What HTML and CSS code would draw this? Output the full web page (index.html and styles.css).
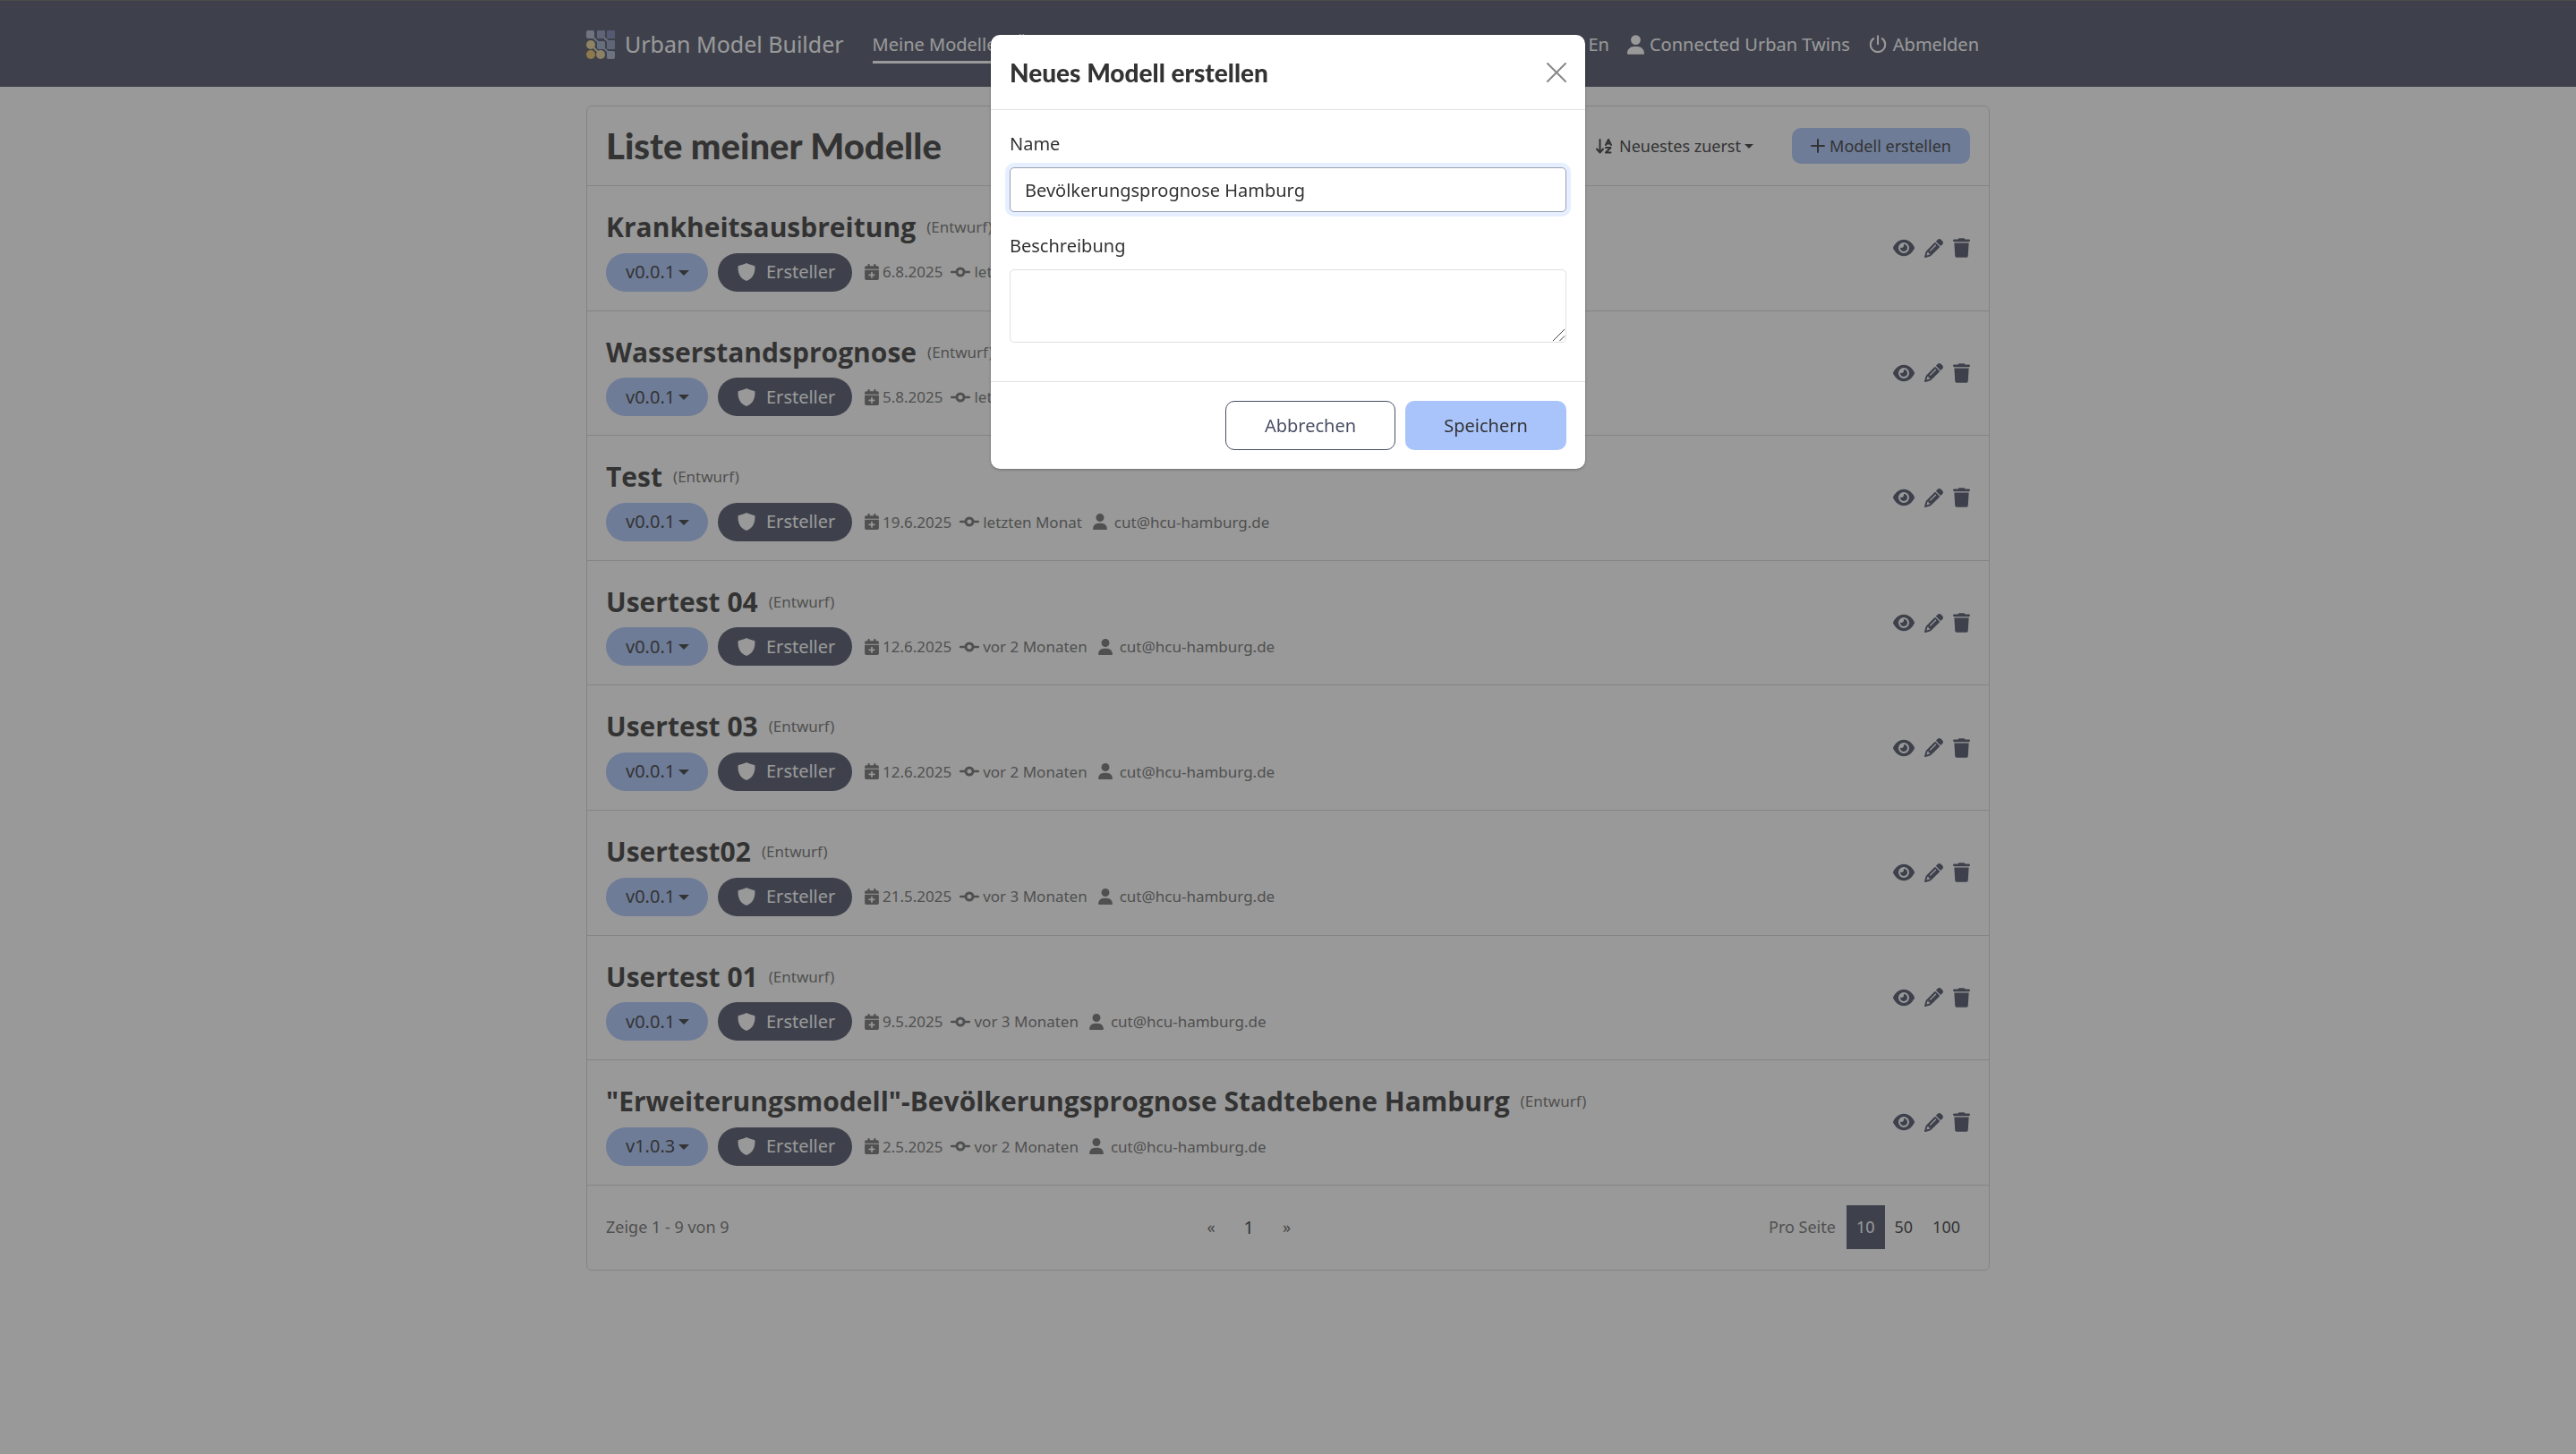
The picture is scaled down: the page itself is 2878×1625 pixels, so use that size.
FILE: index.html
```html
<!DOCTYPE html>
<html lang="de">
<head>
<meta charset="utf-8">
<title>Urban Model Builder</title>
<link rel="stylesheet" href="styles.css">
</head>
<body>
<svg class="sprite" aria-hidden="true">
  <symbol id="i-user" viewBox="0 0 448 512"><path d="M224 256A128 128 0 1 0 224 0a128 128 0 1 0 0 256zm-45.700 48C79.800 304 0 383.800 0 482.300C0 498.700 13.300 512 29.700 512H418.300c16.400 0 29.700-13.300 29.700-29.700C448 383.800 368.200 304 269.700 304H178.300z"/></symbol>
  <symbol id="i-power" viewBox="0 0 32 32"><path d="M16 2v13M9 6a12 12 0 1 0 14 0" fill="none" stroke="currentColor" stroke-width="3" stroke-linecap="round"/></symbol>
  <symbol id="i-shield" viewBox="0 0 32 34"><path d="M16 1c4 2 10 4 15 5c1 12-3 22-15 27C4 28 0 18 1 6c5-1 11-3 15-5z"/></symbol>
  <symbol id="i-cal" viewBox="0 0 448 512"><path d="M96 32V64H48C21.500 64 0 85.500 0 112v48H448V112c0-26.500-21.500-48-48-48H352V32c0-17.700-14.300-32-32-32s-32 14.300-32 32V64H160V32c0-17.700-14.300-32-32-32S96 14.300 96 32zM448 192H0V464c0 26.500 21.500 48 48 48H400c26.500 0 48-21.500 48-48V192zM224 248c13.300 0 24 10.700 24 24v56h56c13.300 0 24 10.700 24 24s-10.700 24-24 24H248v56c0 13.300-10.700 24-24 24s-24-10.700-24-24V376H144c-13.300 0-24-10.700-24-24s10.700-24 24-24h56V272c0-13.300 10.700-24 24-24z"/></symbol>
  <symbol id="i-commit" viewBox="0 0 44 32"><path d="M2 16h11M31 16h11" fill="none" stroke="currentColor" stroke-width="5" stroke-linecap="round"/><circle cx="22" cy="16" r="8" fill="none" stroke="currentColor" stroke-width="6"/></symbol>
  <symbol id="i-eye" viewBox="0 0 576 512"><path d="M288 32c-80.800 0-145.500 36.800-192.600 80.600C48.600 156 17.300 208 2.500 243.700c-3.300 7.900-3.300 16.700 0 24.600C17.300 304 48.600 356 95.400 399.400C142.500 443.200 207.200 480 288 480s145.500-36.800 192.600-80.600c46.800-43.500 78.100-95.400 93-131.100c3.300-7.900 3.300-16.700 0-24.600c-14.900-35.700-46.200-87.700-93-131.100C433.500 68.800 368.800 32 288 32zM144 256a144 144 0 1 1 288 0 144 144 0 1 1 -288 0zm144-64c0 35.300-28.700 64-64 64c-7.100 0-13.900-1.200-20.300-3.300c-5.500-1.800-11.900 1.600-11.700 7.400c.3 6.900 1.300 13.800 3.200 20.700c13.700 51.200 66.400 81.600 117.600 67.900s81.600-66.400 67.900-117.600c-11.100-41.500-47.800-69.400-88.600-71.100c-5.800-.2-9.200 6.100-7.400 11.700c2.100 6.400 3.300 13.200 3.300 20.300z"/></symbol>
  <symbol id="i-pencil" viewBox="0 0 512 512"><path d="M410.300 231l11.300-11.300-33.900-33.900-62.100-62.100L291.700 89.800l-11.300 11.300-22.600 22.600L58.600 322.900c-10.400 10.400-18 23.300-22.200 37.400L1 480.700c-2.500 8.400-.2 17.500 6.100 23.700s15.300 8.500 23.700 6.100l120.300-35.400c14.100-4.200 27-11.800 37.400-22.200L387.700 253.700 410.300 231zM160 399.400l-9.100 22.700c-4 3.100-8.500 5.400-13.300 6.900L59.400 452l23-78.100c1.400-4.900 3.800-9.400 6.900-13.300l22.700-9.100v32c0 8.800 7.200 16 16 16h32zM362.700 18.700L348.300 33.200 325.700 55.800 314.300 67.100l33.900 33.900 62.100 62.100 33.900 33.900 11.300-11.300 22.600-22.600 14.500-14.500c25-25 25-65.500 0-90.500L453.300 18.700c-25-25-65.500-25-90.500 0zm-47.400 168l-144 144c-6.200 6.200-16.400 6.200-22.600 0s-6.200-16.400 0-22.600l144-144c6.200-6.200 16.400-6.200 22.600 0s6.200 16.400 0 22.600z"/></symbol>
  <symbol id="i-trash" viewBox="0 0 448 512"><path d="M135.200 17.700L128 32H32C14.300 32 0 46.300 0 64S14.300 96 32 96H416c17.700 0 32-14.300 32-32s-14.300-32-32-32H320l-7.200-14.300C307.400 6.800 296.300 0 284.200 0H163.800c-12.100 0-23.200 6.800-28.600 17.700zM416 128H32L53.200 467c1.600 25.300 22.600 45 47.900 45H346.900c25.300 0 46.300-19.700 47.900-45L416 128z"/></symbol>
</svg>

<header class="topbar">
  <div class="container topbar-inner">
    <a class="brand" href="#">
      <svg class="logo" viewBox="0 0 32 32" aria-hidden="true">
        <path d="M6 6l10 10M17 5l10 10M16 16l11 11" stroke="#a0adc6" stroke-width="2"/>
        <path d="M5 16l11 11" stroke="#e2cf95" stroke-width="2"/>
        <rect width="9" height="9" rx="2" fill="#aab4c8"/><rect x="12" width="9" height="9" rx="1" fill="#8b96bb"/><rect x="23" width="9" height="9" rx="1" fill="#7681b0"/>
        <circle cx="5" cy="16" r="5" fill="#e8d391"/><rect x="12" y="12" width="9" height="9" rx="2" fill="#9aa8c6"/><rect x="23" y="11" width="9" height="10" rx="1" fill="#8c98bd"/>
        <circle cx="5" cy="27" r="5" fill="#e8bf66"/><circle cx="16" cy="27" r="5" fill="#e2cf95"/><rect x="23" y="23" width="9" height="9" rx="2" fill="#a6b3cc"/>
      </svg>
      Urban Model Builder
    </a>
    <nav class="nav">
      <a class="active" href="#">Meine Modelle</a>
      <a href="#">Öffentliche Modelle</a>
    </nav>
    <nav class="nav nav-right">
      <a href="#">En</a>
      <a href="#"><svg class="icon-user"><use href="#i-user"/></svg>Connected Urban Twins</a>
      <a href="#"><svg class="icon-power"><use href="#i-power"/></svg>Abmelden</a>
    </nav>
  </div>
</header>

<main class="container">
  <section class="panel">
    <div class="panel-head">
      <h1>Liste meiner Modelle</h1>
      <label class="sort">
        <svg class="icon-sort" viewBox="0 0 36 34" aria-hidden="true"><path d="M9 2v28M2 23l7 8 7-8" fill="none" stroke="currentColor" stroke-width="4" stroke-linejoin="round" stroke-linecap="round"/><path d="M22 14l6-12 6 12M24 11h8M22 20h11l-11 11h11" fill="none" stroke="currentColor" stroke-width="4" stroke-linejoin="round" stroke-linecap="round"/></svg>
        <select aria-label="Sortierung"><option>Neuestes zuerst</option></select>
      </label>
      <button class="create" type="button"><svg class="icon-plus" viewBox="0 0 16 16" aria-hidden="true"><path d="M8 1v14M1 8h14" stroke="currentColor" stroke-width="2" stroke-linecap="round"/></svg>Modell erstellen</button>
    </div>
    <ul class="models" id="models"></ul>
    <footer class="panel-foot">
      <span>Zeige 1 - 9 von 9</span>
      <nav class="pages" aria-label="Seiten"><a href="#">«</a><a class="current" href="#">1</a><a href="#">»</a></nav>
      <div class="sizes"><span>Pro Seite</span><a class="selected" href="#">10</a><a href="#">50</a><a href="#">100</a></div>
    </footer>
  </section>
</main>

<div class="backdrop">
  <form class="modal" role="dialog" aria-labelledby="modal-title">
    <div class="modal-head">
      <h2 id="modal-title">Neues Modell erstellen</h2>
      <button class="close" type="button" aria-label="Schließen"><svg viewBox="0 0 22 22"><path d="M1 1l20 20M21 1L1 21" stroke="currentColor" stroke-width="2" stroke-linecap="round"/></svg></button>
    </div>
    <div class="modal-body">
      <label for="name">Name</label>
      <input id="name" type="text" value="Bevölkerungsprognose Hamburg">
      <label for="desc">Beschreibung</label>
      <textarea id="desc"></textarea>
    </div>
    <div class="modal-foot">
      <button class="btn btn-outline" type="button">Abbrechen</button>
      <button class="btn btn-primary" type="button">Speichern</button>
    </div>
  </form>
</div>
<script src="models.js"></script>
</body>
</html>
```
FILE: models.js
```js
const models = [
  ['Krankheitsausbreitung', 'v0.0.1', '6.8.2025', 'letzten Monat'],
  ['Wasserstandsprognose', 'v0.0.1', '5.8.2025', 'letzten Monat'],
  ['Test', 'v0.0.1', '19.6.2025', 'letzten Monat'],
  ['Usertest 04', 'v0.0.1', '12.6.2025', 'vor 2 Monaten'],
  ['Usertest 03', 'v0.0.1', '12.6.2025', 'vor 2 Monaten'],
  ['Usertest02', 'v0.0.1', '21.5.2025', 'vor 3 Monaten'],
  ['Usertest 01', 'v0.0.1', '9.5.2025', 'vor 3 Monaten'],
  ['"Erweiterungsmodell"-Bevölkerungsprognose Stadtebene Hamburg', 'v1.0.3', '2.5.2025', 'vor 2 Monaten'],
];
document.getElementById('models').innerHTML = models.map(([name, version, date, changed]) => `
  <li class="model">
    <div class="model-info">
      <h3>${name} <small>(Entwurf)</small></h3>
      <div class="model-meta">
        <select class="version" aria-label="Version"><option>${version}</option></select>
        <span class="role"><svg><use href="#i-shield"/></svg>Ersteller</span>
        <span class="meta"><svg class="icon-cal"><use href="#i-cal"/></svg>${date}</span>
        <span class="meta"><svg class="icon-commit"><use href="#i-commit"/></svg>${changed}</span>
        <span class="meta owner"><svg class="icon-owner"><use href="#i-user"/></svg>cut@hcu-hamburg.de</span>
      </div>
    </div>
    <div class="actions">
      <button type="button" aria-label="Ansehen"><svg class="icon-eye"><use href="#i-eye"/></svg></button>
      <button type="button" aria-label="Bearbeiten"><svg class="icon-pencil"><use href="#i-pencil"/></svg></button>
      <button type="button" aria-label="Löschen"><svg class="icon-trash"><use href="#i-trash"/></svg></button>
    </div>
  </li>`).join('');
```
FILE: styles.css
```css
* { box-sizing: border-box; }
body {
  margin: 0;
  background: #fff;
  color: #333;
  font: 20px/1.5 "Segoe UI", "Noto Sans", "Open Sans", sans-serif;
}
h1, h2, h3, ul { margin: 0; padding: 0; }
a { color: inherit; text-decoration: none; }
button, select, input, textarea { font: inherit; color: inherit; margin: 0; }
button { border: 0; background: none; padding: 0; cursor: pointer; }
svg { fill: currentColor; flex: none; display: block; }
.sprite { display: none; }
.container { width: 100%; max-width: 1568px; margin: 0 auto; }

.topbar { background: #494f65; color: #fff; border-top: 1px solid #66665a; }
.topbar-inner { display: flex; align-items: center; height: 96px; }
.brand { display: flex; align-items: center; gap: 11px; padding-top: 2px; font-size: 25px; }
.logo { width: 32px; height: 32px; }
.nav { display: flex; gap: 20px; margin-left: 32px; }
.nav a { display: flex; align-items: center; gap: 6px; height: 44px; padding-top: 4px; border-bottom: 3px solid transparent; }
.nav .active { border-color: #fff; }
.nav-right { margin: 0 12px 0 auto; }
.icon-user { width: 19px; height: 22px; }
.icon-power { width: 22px; height: 22px; }

.panel { margin: 21px 0; border: 1px solid #d5d5d5; border-radius: 6px; }
.panel-head { display: flex; align-items: center; height: 89px; padding: 0 21px; border-bottom: 1px solid #d5d5d5; }
h1 { font: 900 40px/1.2 "Century Gothic", Lato, sans-serif; margin-right: auto; }
.sort { display: flex; align-items: center; gap: 8px; margin-right: 43px; font-size: 18px; }
.icon-sort { width: 18px; height: 17px; }
select {
  appearance: none;
  border: 0;
  background: url("data:image/svg+xml,%3Csvg xmlns='http://www.w3.org/2000/svg' viewBox='0 0 12 6'%3E%3Cpath d='M0 0h12L6 6z' fill='%23333'/%3E%3C/svg%3E") no-repeat;
}
.sort select { width: 150px; padding: 0; background-position: right center; background-size: 10px 5px; }
.create { display: flex; align-items: center; justify-content: center; gap: 5px; width: 199px; height: 40px; border-radius: 10px; background: #a9c4fb; font-size: 18px; }
.icon-plus { width: 16px; height: 16px; }

.models { list-style: none; }
.model { display: flex; align-items: center; justify-content: space-between; padding: 21px; border-bottom: 1px solid #d5d5d5; }
.model-info { padding-top: 5px; }
h3 { display: flex; align-items: center; gap: 12px; font: 700 30px/1.32 "Segoe UI", "Open Sans", "Noto Sans", sans-serif; }
h3 small { font: 17px/1.5 "Segoe UI", "Noto Sans", sans-serif; color: #6c6c6c; }
.model-meta { display: flex; align-items: center; margin-top: 9px; }
.version { width: 114px; height: 43px; padding: 0 0 0 22px; border-radius: 22px; background-color: #a9c4fb; background-position: 81px 19px; background-size: 12px 6px; }
.role { display: flex; align-items: center; gap: 12px; width: 150px; height: 43px; margin: 0 14px 0 11px; padding-left: 22px; border-radius: 22px; background: #494f65; color: #fff; }
.role svg { width: 20px; height: 22px; }
.meta { display: flex; align-items: center; gap: 4px; margin-right: 9px; font-size: 17px; color: #6c6c6c; }
.owner { gap: 8px; margin-left: 3px; }
.icon-cal { width: 16px; height: 18px; }
.icon-commit { width: 22px; height: 16px; }
.icon-owner { width: 16px; height: 18px; }
.actions { display: flex; align-items: center; gap: 11px; color: #494f65; }
.icon-eye { width: 24px; height: 22px; }
.icon-pencil { width: 21px; height: 21px; }
.icon-trash { width: 19px; height: 22px; }

.panel-foot { display: flex; justify-content: space-between; align-items: center; height: 94px; padding: 0 21px; font-size: 18px; color: #6c6c6c; }
.pages { display: flex; align-items: center; gap: 32px; color: #555; }
.pages .current { font-size: 20px; color: #333; }
.sizes { display: flex; align-items: center; }
.sizes a { padding: 11px; color: #333; }
.sizes span { margin-right: 12px; }
.sizes .selected { background: #494f65; color: #fff; }

.backdrop { position: fixed; inset: 0; display: flex; justify-content: center; align-items: flex-start; padding-top: 39px; background: rgba(51, 51, 51, .5); }
.modal { width: 664px; border-radius: 10px; background: #fff; box-shadow: 0 1px 3px rgba(0, 0, 0, .3); }
.modal-head { display: flex; align-items: center; justify-content: space-between; height: 84px; padding: 0 21px; border-bottom: 1px solid #dfe1e6; }
h2 { font: 900 28px/1.5 "Century Gothic", Lato, sans-serif; }
.close { color: #888; }
.close svg { width: 22px; height: 22px; }
.modal-body { display: flex; flex-direction: column; padding: 23px 21px 43px; }
.modal-body label { margin-bottom: 11px; }
.modal-body input, .modal-body textarea { width: 100%; border: 1px solid #dfe1e6; border-radius: 5px; padding: 0 16px; background: #fff; outline: 0; }
.modal-body input { height: 50px; margin-bottom: 23px; border-color: #9aa0b0; box-shadow: 0 0 0 5px #e6efff; }
.modal-body textarea { height: 82px; resize: vertical; }
.modal-body textarea::-webkit-resizer {
  background: url("data:image/svg+xml,%3Csvg xmlns='http://www.w3.org/2000/svg' viewBox='0 0 16 16'%3E%3Cpath d='M1 15L15 1M9 15l6-6' stroke='%23333' stroke-width='1'/%3E%3C/svg%3E") no-repeat;
}
.modal-foot { display: flex; justify-content: flex-end; gap: 11px; padding: 21px; border-top: 1px solid #dfe1e6; }
.btn { height: 55px; border-radius: 10px; }
.btn-outline { width: 190px; border: 1px solid #494f65; color: #494f65; }
.btn-primary { width: 180px; background: #a9c4fb; }
```
